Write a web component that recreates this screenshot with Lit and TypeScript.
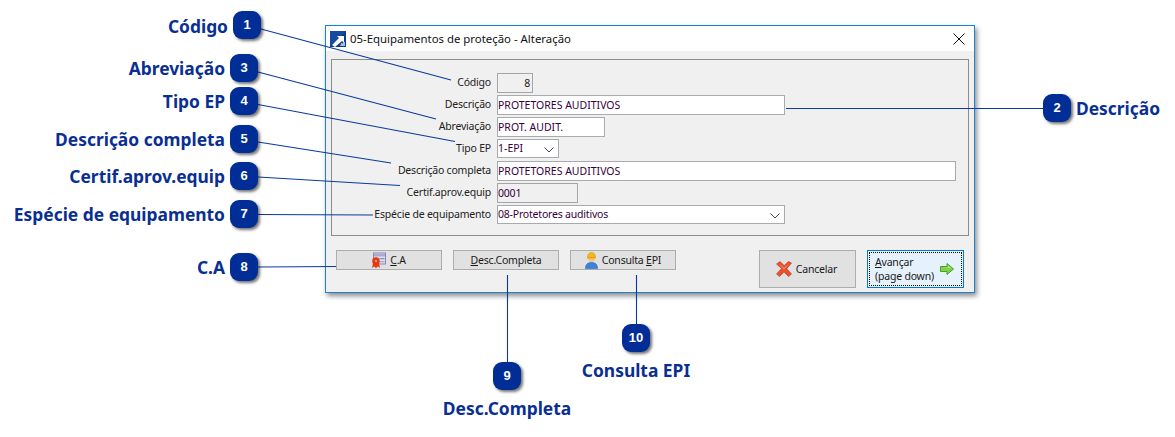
import { LitElement, html, css, svg } from "lit";
import { customElement } from "lit/decorators.js";

const W = 1175;
type Callout = { n: number; bx: number; by: number; text: string; tx: number; ty: number; anchor: "right" | "left" | "center" };
const callouts: Callout[] = [
  { n: 1, bx: 233, by: 11, text: "Código", tx: 228, ty: 26, anchor: "right" },
  { n: 3, bx: 230, by: 54, text: "Abreviação", tx: 225, ty: 68, anchor: "right" },
  { n: 4, bx: 230, by: 87, text: "Tipo EP", tx: 225, ty: 101, anchor: "right" },
  { n: 5, bx: 230, by: 125, text: "Descrição completa", tx: 225, ty: 139, anchor: "right" },
  { n: 6, bx: 230, by: 162, text: "Certif.aprov.equip", tx: 225, ty: 176, anchor: "right" },
  { n: 7, bx: 230, by: 200, text: "Espécie de equipamento", tx: 225, ty: 214, anchor: "right" },
  { n: 8, bx: 230, by: 253, text: "C.A", tx: 225, ty: 267, anchor: "right" },
  { n: 2, bx: 1043, by: 94, text: "Descrição", tx: 1076, ty: 108, anchor: "left" },
  { n: 9, bx: 493, by: 362, text: "Desc.Completa", tx: 507, ty: 408, anchor: "center" },
  { n: 10, bx: 622, by: 324, text: "Consulta EPI", tx: 636, ty: 370, anchor: "center" },
];
const lines = [
  [261, 29, 451, 80],
  [258, 72, 436, 119],
  [258, 104.5, 455, 141.5],
  [258, 142, 391, 163],
  [258, 177, 400, 185.5],
  [258, 214.5, 373, 215],
  [258, 267, 336, 266.5],
  [786, 108.5, 1043, 108.5],
  [507.5, 275, 507.5, 362],
  [636.5, 275, 636.5, 324],
];
const labelStyle = (c: Callout) => {
  const y = `top:${c.ty}px;`;
  if (c.anchor === "right") return `${y}right:${W - c.tx}px;transform:translateY(-50%)`;
  if (c.anchor === "left") return `${y}left:${c.tx}px;transform:translateY(-50%)`;
  return `${y}left:${c.tx}px;transform:translate(-50%,-50%)`;
};

const appIcon = html`<svg width="16" height="16" viewBox="0 0 16 16">
  <rect width="16" height="16" fill="#0f3a86"/><path d="M0 0h16L0 16z" fill="#154a9f"/>
  <path d="M2 14 9 7 7 5h7v7l-2-2-7 6z" fill="#fff"/><path d="M10 15l1.500-3.500 1 1 2.500-2V15z" fill="#a9bde0"/>
</svg>`;
const closeIcon = html`<svg width="12" height="12" viewBox="0 0 12 12"><path d="M.5.5l11 11M11.500.5l-11 11" stroke="#111" stroke-width="1" fill="none"/></svg>`;
const chevron = html`<svg class="chev" width="10" height="6" viewBox="0 0 10 6"><path d="M.5.5 5 5 9.500.5" stroke="#444" fill="none"/></svg>`;
const sealIcon = html`<svg width="14" height="16" viewBox="0 0 14 16">
  <rect x="1.500" y="1" width="12" height="11" fill="#dfe0ee" stroke="#8488b8"/><rect x="2" y="2" width="11" height="2.500" fill="#a9abd0"/><rect x="7.500" y="6" width="5" height="1.300" fill="#8b8fc0"/><rect x="7.500" y="9" width="5" height="1.300" fill="#a8abd0"/>
  <path d="M0 16l1-5h6l1 5-2-1.500L4 16l-2-1.500z" fill="#e33a14"/>
  <circle cx="4" cy="9" r="3.800" fill="#e8380f"/><circle cx="4" cy="9" r="1.100" fill="#ffb090"/>
</svg>`;
const workerIcon = html`<svg width="13" height="17" viewBox="0 0 13 17">
  <path d="M.5 16.500c0-4 2-6 6-6s6 2 6 6z" fill="#3b84d8" stroke="#2566b0" stroke-width=".6"/>
  <circle cx="6.500" cy="6.500" r="3.400" fill="#f4c48e"/>
  <path d="M2.500 5.500C2.500 2.300 4.200.5 6.500.5s4 1.800 4 5z" fill="#f5b915" stroke="#c58d05" stroke-width=".5"/>
  <rect x="2" y="5" width="9" height="1.500" rx=".7" fill="#e6a50c"/>
</svg>`;
const xIcon = html`<svg width="16" height="16" viewBox="0 0 16 16">
  <path d="M.5 3 4 .5l4.200 4L12.500.5 15.500 2 10.800 7.800 15.500 13l-3 2.500-4.500-4.500-4.500 4.500L.5 13l5-5.500z" fill="#e8502e" stroke="#b93a1e" stroke-width=".6"/>
  <path d="M3 2.500l5 4.500 5-4.500-5 6z" fill="#f89a80"/>
</svg>`;
const arrowIcon = html`<svg width="14" height="12" viewBox="0 0 14 12">
  <path d="M.5 3.500H7V.5L13.500 6 7 11.500v-3H.5z" fill="#7ed348" stroke="#4e9a2a"/><path d="M1.500 4.500H8V2.500L11 5z" fill="#b8ee90"/>
</svg>`;

@customElement("app-root")
export class AppRoot extends LitElement {
  static styles = css`
    :host { display: block; position: relative; width: 1175px; height: 437px; background: #fff; overflow: hidden; font-family: "Noto Sans", sans-serif; }
    .window { position: absolute; left: 325px; top: 25px; width: 650px; height: 268px; box-sizing: border-box; border: 1px solid #1883d7; background: #f0f0f0; box-shadow: 2px 3px 5px rgba(0,0,0,.45); display: flex; flex-direction: column; font-size: 10.5px; letter-spacing: -0.2px; color: #1a1a1a; }
    .title { height: 25px; background: #fff; display: flex; align-items: center; padding: 0 9px 0 4px; gap: 4px; font-size: 11.4px; letter-spacing: 0; color: #111; flex: none; }
    .title span { flex: 1; }
    .title svg { display: block; }
    .group { margin: 8px 5px 0 5px; height: 177px; box-sizing: border-box; border: 1px solid #8c8c8c; padding-top: 13px; display: grid; grid-template-columns: 159px 1fr; grid-auto-rows: 20px; column-gap: 6px; row-gap: 2px; align-items: stretch; flex: none; }
    .lab { text-align: right; line-height: 19px; color: #222; white-space: nowrap; }
    .f { box-sizing: border-box; height: 20px; border: 1px solid #a9a9b0; background: #fff; color: #35003c; line-height: 17px; padding: 0; white-space: nowrap; display: flex; justify-content: space-between; align-items: center; }
    .up { letter-spacing: 0; }
    .ro { background: #f0f0f0; border-color: #a5a5a5; }
    .num { justify-content: flex-end; padding-right: 2px; color: #222; }
    .w36 { width: 36px; } .w288 { width: 288px; } .w108 { width: 108px; } .w62 { width: 62px; height: 19px; } .w459 { width: 459px; } .w81 { width: 81px; } .w288c { width: 288px; height: 19px; }
    .chev { margin-right: 4px; margin-top: 3px; flex: none; }
    .foot { display: flex; align-items: flex-start; padding: 14px 10px 0 10px; }
    .btn { box-sizing: border-box; width: 106px; height: 20px; margin-right: 11px; border: 1px solid #adadad; background: #e1e1e1; color: #1a1a1a; display: flex; align-items: center; justify-content: center; gap: 4px; white-space: nowrap; }
    .spacer { flex: 1; }
    .big { box-sizing: border-box; width: 97px; height: 38px; margin: 0; flex: none; border: 1px solid #adadad; background: #e1e1e1; display: flex; align-items: center; justify-content: center; gap: 4px; padding-right: 2px; }
    .next { margin-left: 11px; border: 1px solid #0078d7; background: #e5f1fb; padding: 1px; }
    .next-in { box-sizing: border-box; width: 100%; height: 100%; border: 1px dotted #000; display: flex; align-items: center; justify-content: space-between; padding: 0 7px 0 5px; line-height: 14px; }
    .lines { position: absolute; inset: 0; pointer-events: none; }
    .badge { position: absolute; width: 28px; height: 28px; box-sizing: border-box; border-radius: 9px; background: #002e96; color: #fff; font: bold 13px/28px "Liberation Sans", sans-serif; text-align: center; box-shadow: 2px 2px 3px rgba(0,0,0,.55); }
    .cap { position: absolute; font: bold 17.4px "Noto Sans", sans-serif; color: #0a2f93; white-space: nowrap; }
  `;

  render() {
    return html`
      <div class="window">
        <div class="title">${appIcon}<span>05-Equipamentos de proteção - Alteração</span>${closeIcon}</div>
        <div class="group">
          <div class="lab">Código</div><div><div class="f ro num w36">8</div></div>
          <div class="lab">Descrição</div><div><div class="f up w288">PROTETORES AUDITIVOS</div></div>
          <div class="lab">Abreviação</div><div><div class="f up w108">PROT. AUDIT.</div></div>
          <div class="lab">Tipo EP</div><div><div class="f up w62">1-EPI ${chevron}</div></div>
          <div class="lab">Descrição completa</div><div><div class="f up w459">PROTETORES AUDITIVOS</div></div>
          <div class="lab">Certif.aprov.equip</div><div><div class="f ro w81">0001</div></div>
          <div class="lab">Espécie de equipamento</div><div><div class="f w288c">08-Protetores auditivos ${chevron}</div></div>
        </div>
        <div class="foot">
          <div class="btn">${sealIcon}<span><u>C</u>.A</span></div>
          <div class="btn"><span><u>D</u>esc.Completa</span></div>
          <div class="btn">${workerIcon}<span>Consulta <u>E</u>PI</span></div>
          <div class="spacer"></div>
          <div class="big">${xIcon}<span>Cancelar</span></div>
          <div class="big next"><div class="next-in"><span><u>A</u>vançar<br />(page down)</span>${arrowIcon}</div></div>
        </div>
      </div>
      <svg class="lines" width="1175" height="437" viewBox="0 0 1175 437">
        ${lines.map(([a, b, c, d]) => svg`<line x1=${a} y1=${b} x2=${c} y2=${d} stroke="#0a3a9e" stroke-width="1.100"/>`)}
      </svg>
      ${callouts.map(
        (c) => html`<div class="badge" style="left:${c.bx}px;top:${c.by}px">${c.n}</div>
          <div class="cap" style=${labelStyle(c)}>${c.text}</div>`
      )}
    `;
  }
}
